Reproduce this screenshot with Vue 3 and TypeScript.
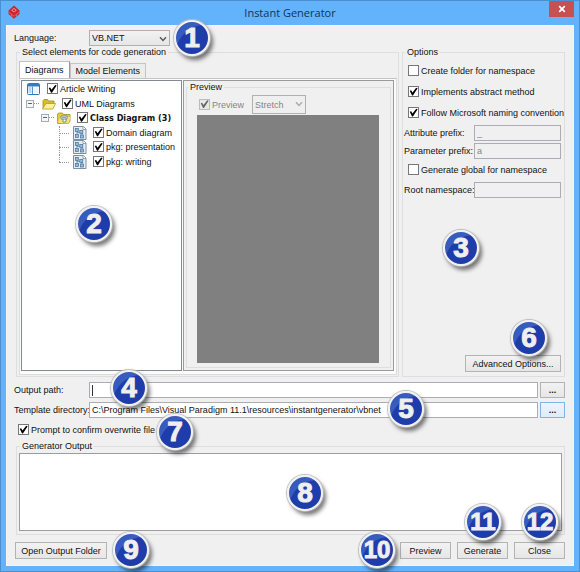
<script setup lang="ts">
import { ref } from 'vue'

interface TreeNode {
  id: string
  label: string
  level: number
  icon: 'project' | 'folder' | 'classes' | 'diagram'
  bold?: boolean
}

const nodes: TreeNode[] = [
  { id: 'n0', label: 'Article Writing', level: 0, icon: 'project' },
  { id: 'n1', label: 'UML Diagrams', level: 1, icon: 'folder' },
  { id: 'n2', label: 'Class Diagram (3)', level: 2, icon: 'classes', bold: true },
  { id: 'n3', label: 'Domain diagram', level: 3, icon: 'diagram' },
  { id: 'n4', label: 'pkg: presentation', level: 3, icon: 'diagram' },
  { id: 'n5', label: 'pkg: writing', level: 3, icon: 'diagram' },
]
const checkedNodes = ref<string[]>(nodes.map((n) => n.id))

const language = ref('VB.NET')
const createFolder = ref(false)
const abstractMethod = ref(true)
const naming = ref(true)
const globalNs = ref(false)
const attrPrefix = ref('_')
const paramPrefix = ref('a')
const rootNs = ref('')
const outputPath = ref('')
const templateDir = ref('C:\\Program Files\\Visual Paradigm 11.1\\resources\\instantgenerator\\vbnet')
const confirmOverwrite = ref(true)
const output = ref('')
const steps = 12
</script>

<template>
  <div class="window">
    <header class="titlebar">
      <svg class="logo" viewBox="0 0 12 14" aria-hidden="true">
        <path d="M6 .5 11.500 5.500V9L6 13.800.5 9V5.500Z" fill="#cf242b" />
        <path d="M6 2.700 8.800 5.200 6 7.500 3.200 5.200Z" fill="#e88a8d" />
        <path d="M6 4 7.300 5.200 6 6.300 4.700 5.200Z" fill="#c11d24" />
        <path d="M.8 7 6 11.300 11.200 7M3.500 9.200V11.500M8.500 9.200V11.500" fill="none" stroke="#c98a9c" stroke-width=".6" />
      </svg>
      <h1>Instant Generator</h1>
      <button class="x" type="button" aria-label="Close window">
        <svg viewBox="0 0 8 8"><path d="M1.200 1.200 6.800 6.800M6.800 1.200 1.200 6.800" stroke="#fff" stroke-width="1.700" /></svg>
      </button>
    </header>

    <main class="client">
      <div class="path-row language">
        <label for="lang">Language:</label>
        <span class="combo">
          <select id="lang" v-model="language"><option>VB.NET</option></select>
          <svg viewBox="0 0 8 6"><path d="M1 1.200 4 4.400 7 1.200" /></svg>
        </span>
      </div>

      <div class="columns">
        <fieldset class="elements">
          <legend>Select elements for code generation</legend>
          <div class="tabs" role="tablist">
            <button type="button" role="tab" class="tab active" aria-selected="true">Diagrams</button>
            <button type="button" role="tab" class="tab" aria-selected="false">Model Elements</button>
          </div>
          <div class="tab-body">
            <div class="tree">
              <ul>
                <li v-for="n in nodes" :key="n.id" :class="['level' + n.level, { bold: n.bold }]">
                  <span v-if="n.level === 1 || n.level === 2" class="expander"></span>
                  <span v-if="n.level === 3" class="branch"></span>
                  <svg v-if="n.icon === 'project'" class="icon" viewBox="0 0 14 14">
                    <rect x=".5" y="1.500" width="12" height="11" rx="1" fill="#fff" stroke="#2e76b8" />
                    <path d="M1 2h11v2.500H1Z" fill="#2d7ed0" />
                    <path d="M1.500 6h3M1.500 8h3M1.500 10h3" stroke="#78ade0" />
                    <path d="M5.500 4.500V12" stroke="#2e76b8" stroke-width=".8" />
                    <path d="M6.500 5.500h5v6h-5Z" fill="#edf5fc" />
                  </svg>
                  <svg v-else-if="n.icon === 'folder'" class="icon" viewBox="0 0 14 14">
                    <path d="M1 11V3.500L2 2.500h3.500L6.500 4H12v3" fill="#d8bd2a" stroke="#a58b16" stroke-width=".8" />
                    <path d="M.6 12 3.800 6.500H13.600L10.800 12Z" fill="#fff39a" stroke="#b29a20" stroke-width=".8" />
                  </svg>
                  <svg v-else-if="n.icon === 'classes'" class="icon" viewBox="0 0 14 14">
                    <path d="M.6 12.500V3l1-1H5.500l1 1.500H13V10l-1.500 2.500Z" fill="#e3cd3c" stroke="#a58b16" stroke-width=".8" />
                    <path d="M1 12 3 6h10.500L11.500 12.500Z" fill="#f3e56b" />
                    <path d="M4 5h6v3H4ZM6 8v3h3V8" fill="#f6f8fb" stroke="#5b7590" stroke-width=".8" />
                    <path d="M5 6.500h4" stroke="#7aa5cf" />
                  </svg>
                  <svg v-else class="icon" viewBox="0 0 14 14">
                    <path d="M.5.5h10L13 3v10.500H.5Z" fill="#e5ebf1" stroke="#718394" stroke-width=".9" />
                    <path d="M10 .5V3.500h3" fill="#fff" stroke="#718394" stroke-width=".7" />
                    <path d="M4 5v4M4 6.500h5M9 6v3" fill="none" stroke="#6d8397" stroke-width=".8" />
                    <g fill="#8ebdec" stroke="#47708f" stroke-width=".7">
                      <rect x="2.300" y="2.500" width="3" height="3" />
                      <rect x="6.800" y="4.500" width="3" height="3" />
                      <rect x="2.500" y="8.500" width="3" height="3" />
                      <rect x="7.500" y="9" width="3" height="3" />
                    </g>
                  </svg>
                  <label><input v-model="checkedNodes" type="checkbox" :value="n.id" />{{ n.label }}</label>
                </li>
              </ul>
            </div>
            <div class="preview-pane">
              <fieldset class="preview">
                <legend>Preview</legend>
                <div class="preview-tools">
                  <label><input type="checkbox" checked disabled />Preview</label>
                  <span class="combo disabled">
                    <select disabled aria-label="Preview size"><option>Stretch</option></select>
                    <svg viewBox="0 0 8 6"><path d="M1 1.200 4 4.400 7 1.200" /></svg>
                  </span>
                </div>
                <div class="canvas"></div>
              </fieldset>
            </div>
          </div>
        </fieldset>

        <fieldset class="options">
          <legend>Options</legend>
          <label class="check-row"><input v-model="createFolder" type="checkbox" />Create folder for namespace</label>
          <label class="check-row"><input v-model="abstractMethod" type="checkbox" />Implements abstract method</label>
          <label class="check-row"><input v-model="naming" type="checkbox" />Follow Microsoft naming convention</label>
          <div class="field-row">
            <label for="attr">Attribute prefix:</label><input id="attr" v-model="attrPrefix" type="text" disabled />
          </div>
          <div class="field-row">
            <label for="param">Parameter prefix:</label><input id="param" v-model="paramPrefix" type="text" disabled />
          </div>
          <label class="check-row"><input v-model="globalNs" type="checkbox" />Generate global for namespace</label>
          <div class="field-row">
            <label for="root">Root namespace:</label><input id="root" v-model="rootNs" type="text" disabled />
          </div>
          <button class="btn advanced" type="button">Advanced Options...</button>
        </fieldset>
      </div>

      <div class="paths">
        <div class="path-row">
          <label for="out">Output path:</label>
          <span class="caret-box"><input id="out" v-model="outputPath" type="text" /></span>
          <button class="btn browse" type="button" aria-label="Browse output path">...</button>
        </div>
        <div class="path-row">
          <label for="tpl">Template directory:</label>
          <input id="tpl" v-model="templateDir" type="text" />
          <button class="btn browse hot" type="button" aria-label="Browse template directory">...</button>
        </div>
      </div>

      <label class="confirm"><input v-model="confirmOverwrite" type="checkbox" />Prompt to confirm overwrite file</label>

      <fieldset class="output">
        <legend>Generator Output</legend>
        <textarea v-model="output" aria-label="Generator Output"></textarea>
      </fieldset>

      <footer>
        <button class="btn open" type="button">Open Output Folder</button>
        <button class="btn" type="button">Preview</button>
        <button class="btn" type="button">Generate</button>
        <button class="btn" type="button">Close</button>
      </footer>
    </main>

    <span v-for="n in steps" :key="n" :class="['badge', 'step' + n, { wide: n > 9 }]"><b>{{ n }}</b></span>
  </div>
</template>

<style>
body {
  margin: 0;
}
</style>

<style scoped>
* {
  box-sizing: border-box;
}
.window {
  position: relative;
  display: flex;
  flex-direction: column;
  min-height: 100vh;
  padding: 0 5px 5px;
  border: 1px solid #4c8fce;
  background: #63b2fc;
  color: #111;
  font: 9px/12px 'Liberation Sans', Arial, sans-serif;
}
button,
input,
select,
textarea {
  margin: 0;
  color: inherit;
  font: inherit;
}
.titlebar {
  display: grid;
  grid-template-columns: 30px 1fr 30px;
  height: 24px;
}
.logo {
  width: 12px;
  height: 14px;
  margin: 4px 0 0 2px;
}
h1 {
  margin: 0;
  color: #17334d;
  font: 11px/24px 'Open Sans', sans-serif;
  text-align: center;
}
.x {
  display: flex;
  align-items: center;
  justify-content: center;
  justify-self: end;
  width: 25px;
  height: 16px;
  padding: 0;
  border: 0;
  background: #c75050;
}
.x svg {
  width: 8px;
  height: 8px;
}
.client {
  display: flex;
  flex: 1;
  flex-direction: column;
  padding: 4px 8px 6px 7px;
  border: 1px solid #f8f4ee;
  background: #f0f0f0;
}
fieldset {
  min-width: 0;
  margin: 0;
  border: 1px solid #dedede;
}
legend {
  margin-left: 1px;
  padding: 0 2px;
  line-height: 10px;
}
label {
  white-space: nowrap;
}
.path-row {
  display: grid;
  grid-template-columns: 75px 1fr 27px;
  align-items: center;
  height: 16px;
}
.combo {
  position: relative;
  display: block;
  width: 81px;
  height: 16px;
}
.combo select {
  width: 100%;
  height: 100%;
  padding: 0 2px;
  border: 1px solid #b0b0b0;
  border-radius: 0;
  background: linear-gradient(#f2f2f2, #e6e6e6);
  appearance: none;
}
.combo svg {
  position: absolute;
  top: 6px;
  right: 3px;
  width: 8px;
  height: 6px;
  fill: none;
  stroke: #555;
  stroke-width: 1.4;
  pointer-events: none;
}
.combo.disabled {
  width: 54px;
  height: 19px;
  color: #858585;
}
.combo.disabled select {
  background: #efefef;
  opacity: 1;
}
.combo.disabled svg {
  stroke: #aaa;
}
.columns {
  display: grid;
  flex: 1;
  grid-template-columns: 1fr 163px;
  gap: 3px;
  margin-top: 1px;
}
.elements {
  display: flex;
  flex-direction: column;
  margin-left: 2px;
  padding: 4px 1px 1px 2px;
}
.tabs {
  display: flex;
  align-items: flex-end;
}
.tab {
  height: 15px;
  padding: 0 5px;
  border: 1px solid #c4c4c4;
  border-bottom: 0;
  background: #ececec;
  line-height: 14px;
}
.tab.active {
  height: 17px;
  border-right-color: #999;
  background: #fff;
}
.tab-body {
  display: grid;
  flex: 1;
  grid-template-columns: 161px 1fr;
  gap: 1px;
  padding: 1px 2px 3px 1px;
  border: 1px solid #dcdcdc;
  border-top-color: #c4c4c4;
  background: #fbfbfb;
}
.tree {
  padding: 1px 0;
  border: 1px solid #858a92;
  background: #fff;
}
ul {
  display: grid;
  grid-template-rows: repeat(6, 1fr);
  height: 87px;
  margin: 0;
  padding: 0;
  list-style: none;
}
li {
  display: flex;
  align-items: center;
  padding-left: 5px;
}
li label {
  margin-left: 6px;
}
.level1 {
  padding-left: 4px;
}
.level2 {
  padding-left: 19px;
}
.level3 {
  padding-left: 37px;
}
.icon {
  flex: none;
  width: 14px;
  height: 14px;
}
.bold {
  font-family: 'DejaVu Sans Condensed', 'DejaVu Sans', sans-serif;
  font-weight: bold;
}
.expander {
  position: relative;
  flex: none;
  width: 8px;
  height: 8px;
  margin-right: 8px;
  border: 1px solid #a3abb3;
  background: #f6f6f6;
}
.expander::before {
  position: absolute;
  top: 2px;
  left: 1px;
  width: 4px;
  border-top: 1px solid #4766a0;
  content: '';
}
.expander::after {
  position: absolute;
  top: 2px;
  left: 7px;
  width: 5px;
  border-top: 1px dotted #999;
  content: '';
}
.branch {
  position: relative;
  align-self: stretch;
  flex: none;
  width: 10px;
  margin-right: 4px;
}
.branch::before {
  position: absolute;
  top: 0;
  bottom: 0;
  left: 0;
  border-left: 1px dotted #999;
  content: '';
}
.branch::after {
  position: absolute;
  top: 50%;
  left: 0;
  width: 10px;
  border-top: 1px dotted #999;
  content: '';
}
li:last-child .branch::before {
  bottom: 50%;
}
.preview-pane {
  display: flex;
  padding: 1px 2px 2px;
  border: 1px solid #9a9a9a;
  background: #f0f0f0;
}
.preview {
  display: flex;
  flex: 1;
  flex-direction: column;
  padding: 3px 11px 4px 10px;
}
.preview legend {
  margin-left: -9px;
}
.preview-tools {
  display: flex;
  align-items: center;
  gap: 8px;
  margin-bottom: 1px;
  padding-left: 2px;
  color: #858585;
}
.canvas {
  flex: 1;
  min-height: 200px;
  background: #808080;
}
input[type='checkbox'] {
  position: relative;
  display: inline-block;
  width: 11px;
  height: 11px;
  margin-right: 2px;
  border: 1px solid #777;
  background: #fff;
  vertical-align: -2px;
  appearance: none;
}
input[type='checkbox']:checked::before {
  position: absolute;
  inset: 0;
  background: #000;
  clip-path: polygon(8% 42%, 24% 36%, 39% 60%, 80% 8%, 96% 14%, 44% 94%, 34% 94%);
  content: '';
}
input[type='checkbox']:disabled {
  border-color: #bbb;
  background: #e8e8e8;
}
input[type='checkbox']:disabled::before {
  background: #666;
}
input[type='text'] {
  display: block;
  width: 100%;
  min-width: 0;
  height: 16px;
  padding: 0 2px;
  border: 1px solid #abadb3;
  border-radius: 0;
  outline: 0;
  background: #fff;
}
input[type='text']:disabled {
  background: #f0f0f0;
  color: #858585;
}
.options {
  display: flex;
  flex-direction: column;
  padding: 4px 3px 4px 1px;
}
.options legend {
  margin-left: 1px;
}
.check-row {
  height: 21px;
  padding-left: 4px;
  line-height: 20px;
}
.field-row {
  display: grid;
  grid-template-columns: 70px 1fr;
  align-items: center;
  height: 18px;
}
.btn {
  height: 17px;
  padding: 0 2px;
  border: 1px solid #b3b3b3;
  background: linear-gradient(#f2f2f2, #e6e6e6);
  line-height: 14px;
  white-space: nowrap;
}
.advanced {
  align-self: flex-end;
  width: 96px;
  margin-top: auto;
}
.paths {
  display: grid;
  gap: 4px;
  margin-top: 5px;
}
.caret-box {
  position: relative;
}
.caret-box::after {
  position: absolute;
  top: 3px;
  left: 3px;
  height: 11px;
  border-left: 1px solid #333;
  content: '';
}
.browse {
  height: 16px;
  margin-left: 2px;
  font-weight: bold;
  line-height: 12px;
}
.browse.hot {
  border-color: #7eb4ea;
  background: linear-gradient(#ecf4fc, #dcecfc);
}
.confirm {
  margin: 6px 0 5px 4px;
}
.output {
  display: flex;
  margin-left: 2px;
  padding: 2px 2px 3px;
}
textarea {
  flex: 1;
  height: 78px;
  padding: 2px;
  border: 1px solid #9a9da5;
  outline: 0;
  background: #fff;
  resize: none;
}
footer {
  display: flex;
  gap: 6px;
  margin-top: 7px;
  padding-left: 1px;
}
footer .btn {
  width: 51px;
}
footer .open {
  width: 92px;
  margin-right: auto;
}
.badge {
  position: absolute;
  display: flex;
  align-items: center;
  justify-content: center;
  width: 36px;
  height: 36px;
  border: 2px solid #f1f1f1;
  border-radius: 50%;
  background:
    radial-gradient(circle at 90% 100%, #1f3cab 0 66%, transparent 69%),
    linear-gradient(135deg, #3355ba, #4870ca);
  box-shadow:
    0 0 1px 1px #bbb,
    3px 4px 4px #0008;
  pointer-events: none;
}
.badge b {
  color: #efefef;
  font: bold 28px/32px 'Liberation Sans', sans-serif;
  -webkit-text-stroke: 1px #efefef;
}
.badge.wide b {
  font-size: 24px;
}
.step1 {
  top: 19px;
  left: 173px;
}
.step2 {
  top: 205px;
  left: 75px;
}
.step3 {
  top: 229px;
  right: 100px;
}
.step4 {
  bottom: 165px;
  left: 110px;
}
.step5 {
  right: 155px;
  bottom: 144px;
}
.step6 {
  right: 32px;
  bottom: 215px;
}
.step7 {
  bottom: 121px;
  left: 156px;
}
.step8 {
  bottom: 60px;
  left: 286px;
}
.step9 {
  bottom: 3px;
  left: 112px;
}
.step10 {
  right: 184px;
  bottom: 3px;
}
.step11 {
  right: 78px;
  bottom: 31px;
}
.step12 {
  right: 21px;
  bottom: 31px;
}
</style>
